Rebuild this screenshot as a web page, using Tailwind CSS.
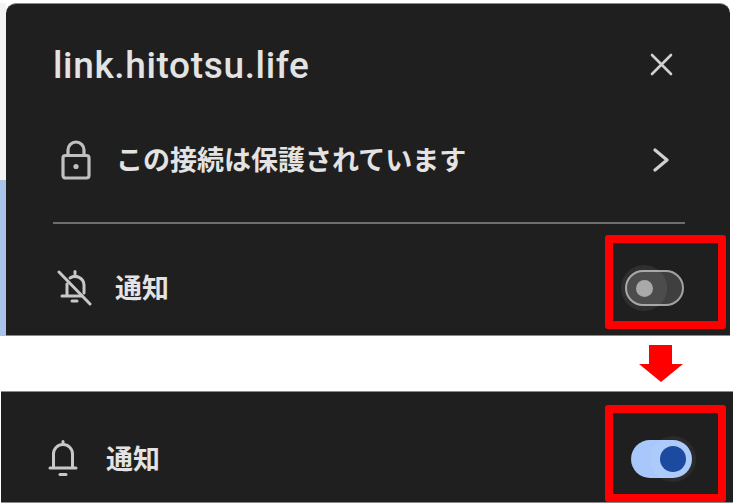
<!DOCTYPE html>
<html lang="ja">
<head>
    <meta charset="UTF-8">
    <title>通知設定</title>
    <script src="https://cdn.jsdelivr.net/npm/@tailwindcss/browser@4"></script>
</head>
<body class="w-[733px] h-[504px] overflow-hidden bg-white font-['Roboto','Noto_Sans_CJK_JP',sans-serif]">
    <!-- Top: site info popup, notifications off -->
    <div class="flex h-[336px] pt-[3px]">
        <div class="w-[6px] flex flex-col">
            <div class="h-[177px] bg-[#f3f3f3]"></div>
            <div class="flex-1 bg-[#a9c4e8]"></div>
        </div>
        <div class="w-[724px] bg-[#1f1f1f] rounded-t-[10px] border-t border-b border-[#8a8a8a] pl-[47px] pr-[46px] flex flex-col">
            <div class="h-[121px] flex items-center justify-between pb-[1px]">
                <span class="text-[37px] tracking-[0.65px] font-medium text-[#e3e3e3] leading-none pt-[2px]">link.hitotsu.life</span>
                <svg class="w-[23px] h-[23px] mr-[11px]" viewBox="0 0 23 23" fill="none" stroke="#d0d0d0" stroke-width="2.6" stroke-linecap="round">
                    <path d="M2 2 L21 21 M21 2 L2 21"/>
                </svg>
            </div>
            <div class="h-[95px] -mt-[13px] flex items-center justify-between">
                <div class="flex items-center gap-[27px] pl-[8px]">
                    <svg class="w-[30px] h-[40px]" viewBox="0 0 30 40" fill="none" stroke="#c0c0c0" stroke-width="3.2">
                        <rect x="2" y="15.5" width="26" height="22.5" rx="2.5"/>
                        <path d="M7 15 V10 a8 8 0 0 1 16 0 V15"/>
                        <circle cx="15" cy="26.5" r="2.6" fill="#c0c0c0" stroke="none"/>
                    </svg>
                    <span class="text-[27px] font-semibold text-[#e3e3e3] leading-none -ml-[2px] pt-[4px]">この接続は保護されています</span>
                </div>
                <svg class="w-[16px] h-[24px] mr-[15px]" viewBox="0 0 16 24" fill="none" stroke="#d0d0d0" stroke-width="3.2" stroke-linecap="round" stroke-linejoin="round">
                    <path d="M2 2 L14 12 L2 22"/>
                </svg>
            </div>
            <div class="h-[2px] bg-[#6e6e6e] mt-[15px] -mr-[1px]"></div>
            <div class="flex-1 flex items-center justify-between pt-[17px]">
                <div class="flex items-center gap-[22px] pl-[4px]">
                    <svg class="w-[36px] h-[38px]" viewBox="0 0 36 38" fill="none" stroke="#c8c8c8" stroke-width="3" stroke-linecap="round" stroke-linejoin="round">
                        <path d="M10 15 V27 H5 M10 27 H25 M13 9 A 9 9 0 0 1 27 16 V24"/>
                        <path d="M18 2.5 V5"/>
                        <path d="M15 32 H20"/>
                        <path d="M2 3 L33 35"/>
                    </svg>
                    <span class="text-[27px] font-semibold text-[#e3e3e3] leading-none pt-[2px]">通知</span>
                </div>
                <!-- toggle off -->
                <div class="relative w-[59px] h-[36px] rounded-full bg-[#3e3f3e] border-2 border-[#a3a3a3]">
                    <div class="absolute left-[-6px] top-[-7px] w-[46px] h-[46px] rounded-full bg-white/7 flex items-center justify-center">
                        <div class="w-[17px] h-[17px] rounded-full bg-[#a9a9a9]"></div>
                    </div>
                </div>
            </div>
        </div>
        <div class="w-[3px]"></div>
    </div>

    <!-- Arrow between the two states -->
    <div class="h-[55px] flex flex-col items-center pl-[588px] pt-[9px]">
        <div class="w-[23px] h-[19px] bg-[#ff0000]"></div>
        <div class="w-0 h-0 border-l-[22px] border-r-[22px] border-t-[18px] border-l-transparent border-r-transparent border-t-[#ff0000]"></div>
    </div>

    <!-- Bottom: notifications on -->
    <div class="ml-[1px] h-[112px] bg-[#1f1f1f] border-t border-b border-[#8a8a8a] flex items-center justify-between pl-[47px] pr-[41px] pt-[24px]">
        <div class="flex items-center gap-[28px]">
            <svg class="w-[30px] h-[38px]" viewBox="0 0 30 38" fill="none" stroke="#c8c8c8" stroke-width="3" stroke-linecap="round" stroke-linejoin="round">
                <path d="M2 28 H28 M5.5 28 V14 A 9.5 9.5 0 0 1 24.5 14 V28"/>
                <path d="M15 1.5 V4.5"/>
                <path d="M12 34.5 H18"/>
            </svg>
            <span class="text-[27px] font-semibold text-[#e3e3e3] leading-none pt-[2px]">通知</span>
        </div>
        <!-- toggle on -->
        <div class="relative w-[61px] h-[38px] rounded-full bg-[#a8c7fa]">
            <div class="absolute left-[19px] top-[-4px] w-[46px] h-[46px] rounded-full bg-white/5 flex items-center justify-center">
                <div class="w-[26px] h-[26px] rounded-full bg-[#1c4aa0]"></div>
            </div>
        </div>
    </div>

    <!-- Red highlight boxes (annotations over the screenshot) -->
    <div class="absolute left-[605px] top-[235px] w-[121px] h-[94px] border-[8px] border-[#ff0000] rounded-[3px]"></div>
    <div class="absolute left-[605px] top-[405px] w-[121px] h-[97px] border-[8px] border-[#ff0000] rounded-[3px]"></div>
</body>
</html>
